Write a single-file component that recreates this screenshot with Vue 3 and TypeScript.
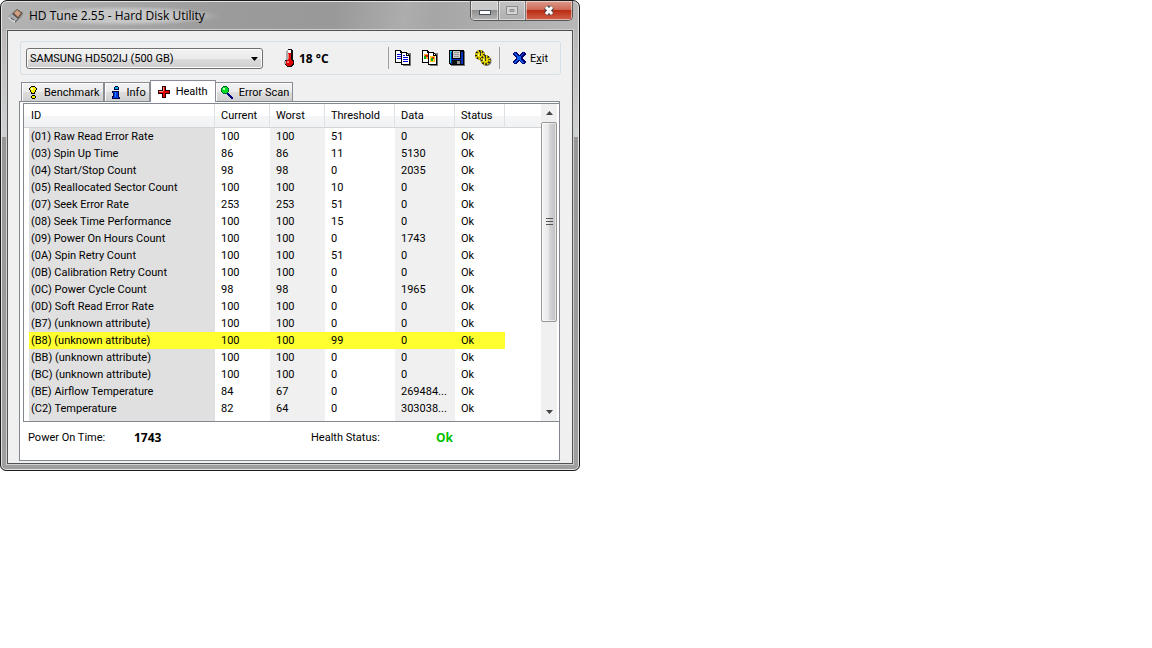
<script setup lang="ts">
import { ref } from 'vue'

interface Attribute {
  name: string
  current: number
  worst: number
  threshold: number
  data: string
  warn?: boolean
}

const drive = ref('SAMSUNG HD502IJ (500 GB)')

const columns = ['ID', 'Current', 'Worst', 'Threshold', 'Data', 'Status']

const attributes: Attribute[] = [
  { name: '(01) Raw Read Error Rate', current: 100, worst: 100, threshold: 51, data: '0' },
  { name: '(03) Spin Up Time', current: 86, worst: 86, threshold: 11, data: '5130' },
  { name: '(04) Start/Stop Count', current: 98, worst: 98, threshold: 0, data: '2035' },
  { name: '(05) Reallocated Sector Count', current: 100, worst: 100, threshold: 10, data: '0' },
  { name: '(07) Seek Error Rate', current: 253, worst: 253, threshold: 51, data: '0' },
  { name: '(08) Seek Time Performance', current: 100, worst: 100, threshold: 15, data: '0' },
  { name: '(09) Power On Hours Count', current: 100, worst: 100, threshold: 0, data: '1743' },
  { name: '(0A) Spin Retry Count', current: 100, worst: 100, threshold: 51, data: '0' },
  { name: '(0B) Calibration Retry Count', current: 100, worst: 100, threshold: 0, data: '0' },
  { name: '(0C) Power Cycle Count', current: 98, worst: 98, threshold: 0, data: '1965' },
  { name: '(0D) Soft Read Error Rate', current: 100, worst: 100, threshold: 0, data: '0' },
  { name: '(B7) (unknown attribute)', current: 100, worst: 100, threshold: 0, data: '0' },
  { name: '(B8) (unknown attribute)', current: 100, worst: 100, threshold: 99, data: '0', warn: true },
  { name: '(BB) (unknown attribute)', current: 100, worst: 100, threshold: 0, data: '0' },
  { name: '(BC) (unknown attribute)', current: 100, worst: 100, threshold: 0, data: '0' },
  { name: '(BE) Airflow Temperature', current: 84, worst: 67, threshold: 0, data: '269484...' },
  { name: '(C2) Temperature', current: 82, worst: 64, threshold: 0, data: '303038...' },
]
</script>

<template>
  <main class="window">
    <header class="titlebar">
      <svg class="app-icon" width="16" height="16" viewBox="0 0 16 16" aria-hidden="true">
        <path d="M0 9 7 2l8 5-8 8z" fill="#62666b" />
        <path d="M0 9 7 2l8 5-8 6z" fill="#a9adb1" />
        <path d="M4 6 9 1l6 4-5 6z" fill="#5f5048" />
        <path d="M6 5 9 2l4 3-3 4z" fill="#d3a080" />
        <path d="M0 9l7 4v2L0 10z" fill="#dfe3e6" />
        <path d="M3 10l3 2" stroke="#444" />
      </svg>
      <h1>HD Tune 2.55 - Hard Disk Utility</h1>
      <div class="controls">
        <button type="button" class="ctl min" aria-label="Minimize">
          <svg width="14" height="6" viewBox="0 0 14 6"><rect x="1.500" y="1.500" width="11" height="4" fill="#fff" stroke="#45505a" /></svg>
        </button>
        <button type="button" class="ctl max" aria-label="Maximize" disabled>
          <svg width="12" height="9" viewBox="0 0 12 9"><path d="M.5.500h11v8H.5zM4 3.500h4v2H4z" fill="#d4d4d4" fill-rule="evenodd" stroke="#8d8d8d" /></svg>
        </button>
        <button type="button" class="ctl close" aria-label="Close">
          <svg width="12" height="11" viewBox="0 0 12 11">
            <path d="M3 2l6 7M9 2l-6 7" stroke="#4b4650" stroke-width="5" />
            <path d="M3 2l6 7M9 2l-6 7" stroke="#fff" stroke-width="3" />
          </svg>
        </button>
      </div>
    </header>

    <div class="client">
      <div class="toolbar">
        <label class="drive">
          <select v-model="drive" aria-label="Drive">
            <option>SAMSUNG HD502IJ (500 GB)</option>
          </select>
          <svg class="arrow" width="7" height="4" viewBox="0 0 7 4" aria-hidden="true"><path d="M0 0h7L3.500 4z" /></svg>
        </label>
        <div class="temp">
          <svg width="10" height="18" viewBox="0 0 10 18" shape-rendering="crispEdges" aria-hidden="true">
            <path d="M4 0h4v1h1v10h1v5H9v1H8v1H3v-1H2v-1H1v-1H0v-3h1v-1h1V2h1V1h1z" fill="#111" />
            <path d="M3 1h3v1H4v9H2V2h1zM0 12h2v3H0z" fill="#aaa" />
            <path d="M4 1h3v3H4z" fill="#fff" />
            <path d="M4 4h3v7h1v1h1v3H8v1H7v1H3v-1H2v-4h1v-1h1z" fill="#e00000" />
            <path d="M3 12h2v2H3zM4 5h1v5H4z" fill="#ff7d7d" />
          </svg>
          <strong>18 °C</strong>
        </div>
        <div class="tools">
          <button type="button" aria-label="Copy text">
            <svg width="17" height="16" viewBox="0 0 17 16" shape-rendering="crispEdges">
              <path d="M0 0h6v1h1v1h1v11H0z" fill="#000" />
              <path d="M1 1h4v2h2v9H1z" fill="#fff" />
              <path d="M2 4h4v1H2zM2 6h4v1H2zM2 8h4v1H2z" fill="#0000e0" />
              <path d="M8 3h8v13H8z" fill="#777" />
              <path d="M6 2h6v1h1v1h1v1h1v10H6z" fill="#000" />
              <path d="M7 3h4v3h3v8H7z" fill="#fff" />
              <path d="M12 4h1v1h-1z" fill="#fff" />
              <path d="M8 5h2v1H8zM8 7h5v1H8zM8 9h5v1H8zM8 11h5v1H8z" fill="#0000e0" />
            </svg>
          </button>
          <button type="button" aria-label="Copy image">
            <svg width="17" height="16" viewBox="0 0 17 16" shape-rendering="crispEdges">
              <path d="M0 0h6v1h1v1h1v11H0z" fill="#000" />
              <path d="M1 1h4v2h2v9H1z" fill="#fff" />
              <path d="M2 4h4v5H2z" fill="#ffa528" />
              <path d="M3 5h3v2H3z" fill="#e01800" /><path d="M2 6h2v3H2z" fill="#00b418" />
              <path d="M8 3h8v13H8z" fill="#777" />
              <path d="M6 2h6v1h1v1h1v1h1v10H6z" fill="#000" />
              <path d="M7 3h4v3h3v8H7z" fill="#fff" />
              <path d="M12 4h1v1h-1z" fill="#fff" />
              <path d="M8 6h5v6H8z" fill="#ffc32c" />
              <path d="M10 7h2v2h-2z" fill="#e01800" /><path d="M9 8h2v3H9z" fill="#00b418" />
            </svg>
          </button>
          <button type="button" aria-label="Save">
            <svg width="16" height="16" viewBox="0 0 16 16" shape-rendering="crispEdges">
              <path d="M1 1h15v15H2z" fill="#777" />
              <path d="M0 0h15v15H1v-1H0z" fill="#000" />
              <path d="M1 1h2v12H1z" fill="#00c8e8" />
              <path d="M2 2h12v12H2z" fill="#0830b8" />
              <path d="M3 1h9v8H3z" fill="#000" />
              <path d="M4 1h7v7H4z" fill="#ccc" />
              <path d="M5 2h5v1H5zM5 4h5v1H5zM5 6h5v1H5z" fill="#999" />
              <path d="M3 10h9v4H3z" fill="#111" />
              <path d="M8 11h3v3H8z" fill="#999" />
            </svg>
          </button>
          <button type="button" aria-label="Options">
            <svg width="17" height="16" viewBox="0 0 17 16">
              <circle cx="11.500" cy="11" r="4" fill="#555" stroke="#666" stroke-width="2" />
              <circle cx="5" cy="5" r="4" fill="#e8d800" stroke="#111" stroke-width="2" />
              <circle cx="5" cy="5" r="4" fill="none" stroke="#f4e200" stroke-width="2" stroke-dasharray="1.600 1.540" />
              <circle cx="10.500" cy="10" r="4" fill="#e8d800" stroke="#111" stroke-width="2" />
              <circle cx="10.500" cy="10" r="4" fill="none" stroke="#f4e200" stroke-width="2" stroke-dasharray="1.600 1.540" />
              <path d="M5 1h1v5H5zM10 6h1v5h-1z" fill="#333" />
              <path d="M3 4h1v2H3zM8 9h1v2H8z" fill="#fffca0" />
            </svg>
          </button>
        </div>
        <button type="button" class="exit">
          <svg width="13" height="12" viewBox="0 0 13 12" shape-rendering="crispEdges" aria-hidden="true">
            <path d="M1 0h3v1h1v1h1v1h1V2h1V1h1V0h3v1h1v2h-1v1h-1v1h-1v2h1v1h1v1h1v2h-1v1H9v-1H8v-1H7V9H6v1H5v1H4v1H1v-1H0V9h1V8h1V7h1V5H2V4H1V3H0V1h1z" fill="#000070" />
            <path d="M1 1h2v1h1v1h1v1h3V3h1V2h1V1h1v1h-1v1H9v1H8v4h1v1h1v1h1v1H9v-1H8V9H7V8H5v1H4v1H3v1H1v-1h1V9h1V8h1V4H3V3H2V2H1z" fill="#1060f0" />
          </svg>
          <span>E<u>x</u>it</span>
        </button>
      </div>

      <nav class="tabs" role="tablist">
        <button type="button" class="tab" role="tab">
          <svg width="8" height="13" viewBox="0 0 8 13" shape-rendering="crispEdges" aria-hidden="true">
            <path d="M2 0h4v1h1v1h1v2H7v2H6v2H2V6H1V4H0V2h1V1h1zM3 9h3v1h1v2H6v1H3v-1H2v-2h1z" fill="#000" />
            <path d="M2 1h4v1h1v2H6v2H5v1H3V6H2V4H1V2h1zM3 10h3v2H3z" fill="#f6e900" />
            <path d="M2 2h2v2H2z" fill="#ffffb8" />
          </svg>
          Benchmark
        </button>
        <button type="button" class="tab" role="tab">
          <svg width="8" height="13" viewBox="0 0 8 13" shape-rendering="crispEdges" aria-hidden="true">
            <path d="M3 0h3v1h1v3H2V1h1zM1 5h6v6h1v2H0v-3h1V7H0V5z" fill="#000040" />
            <path d="M3 1h3v2H3z" fill="#00b7e8" />
            <path d="M1 6h5v5h1v1H1v-1h1V7H1z" fill="#0038e0" />
            <path d="M3 6h1v5H3z" fill="#2080ff" />
          </svg>
          Info
        </button>
        <button type="button" class="tab active" role="tab" aria-selected="true">
          <svg width="12" height="12" viewBox="0 0 12 12" shape-rendering="crispEdges" aria-hidden="true">
            <path d="M4 0h4v4h4v4H8v4H4V8H0V4h4z" fill="#200" />
            <path d="M5 1h2v4h4v2H7v4H5V7H1V5h4z" fill="#e60000" />
            <path d="M5 1h1v4H5zM1 5h4v1H1z" fill="#ff9090" />
          </svg>
          Health
        </button>
        <button type="button" class="tab scan" role="tab">
          <svg width="12" height="13" viewBox="0 0 12 13" shape-rendering="crispEdges" aria-hidden="true">
            <path d="M7 7h1v1h1v1h1v1h1v1h1v2h-2v-1H9v-1H8v-1H7V9H6V7z" fill="#000080" />
            <path d="M2 0h4v1h1v1h1v4H7v1H6v1H2V7H1V6H0V2h1V1h1z" fill="#063" />
            <path d="M2 1h4v1h1v4H6v1H2V6H1V2h1z" fill="#00e020" />
            <path d="M2 2h2v2H2z" fill="#c0ffb0" />
          </svg>
          Error Scan
        </button>
      </nav>

      <section class="panel">
        <div class="list">
          <table>
            <colgroup>
              <col class="c-id" /><col class="c-cur" /><col class="c-cur" /><col class="c-thr" /><col class="c-data" /><col class="c-stat" /><col />
            </colgroup>
            <thead>
              <tr>
                <th v-for="c in columns" :key="c" scope="col">{{ c }}</th>
                <td></td>
              </tr>
            </thead>
            <tbody>
              <tr v-for="a in attributes" :key="a.name" :class="{ warn: a.warn }">
                <td class="id">{{ a.name }}</td>
                <td>{{ a.current }}</td>
                <td class="alt">{{ a.worst }}</td>
                <td>{{ a.threshold }}</td>
                <td class="alt">{{ a.data }}</td>
                <td>Ok</td>
                <td class="rest"></td>
              </tr>
              <tr class="tail" aria-hidden="true">
                <td class="id"></td><td></td><td class="alt"></td><td></td><td class="alt"></td><td></td><td></td>
              </tr>
            </tbody>
          </table>
          <div class="scrollbar">
            <button type="button" aria-label="Scroll up"><svg width="7" height="4" viewBox="0 0 7 4"><path d="M0 4h7L3.500 0z" fill="#444" /></svg></button>
            <div class="track">
              <div class="thumb"><i></i><i></i><i></i></div>
            </div>
            <button type="button" aria-label="Scroll down"><svg width="7" height="4" viewBox="0 0 7 4"><path d="M0 0h7L3.500 4z" fill="#444" /></svg></button>
          </div>
        </div>
        <footer class="summary">
          <span class="k1">Power On Time:</span>
          <strong class="v1">1743</strong>
          <span class="k2">Health Status:</span>
          <strong class="ok">Ok</strong>
        </footer>
      </section>
    </div>
  </main>
</template>

<style>
body {
  background: #fff;
}
</style>

<style scoped>
* {
  box-sizing: border-box;
}

.window {
  width: 50%;
  min-width: 580px;
  padding: 0 6px 6px;
  border: 1px solid #1c1c1c;
  border-radius: 7px 7px 6px 6px;
  box-shadow: inset 0 0 0 1px #e4e4e4;
  background:
    linear-gradient(100deg, #b4b4b4 0, #9b9b9b 220px, #999 330px, #adadad 400px, #a6a6a6 430px, #b8b8b8 100%) top / 100% 30px no-repeat,
    linear-gradient(#b5b0b0 0, #cfd2d3 136px, #979797 136px, #a09f9f 100%);
  font: 11px/17px Roboto, "Liberation Sans", sans-serif;
  color: #000;
}

button {
  font: inherit;
  color: inherit;
  border: 0;
  padding: 0;
  background: none;
}

svg {
  display: block;
  flex: none;
}

.titlebar {
  display: flex;
  align-items: flex-start;
  height: 29px;
}

.app-icon {
  margin: 7px 0 0 1px;
}

h1 {
  margin: 5px 0 0;
  padding: 0 16px 0 5px;
  font: 12px/20px "Open Sans", "Noto Sans", sans-serif;
  background: radial-gradient(closest-side, #d6d6d6aa 60%, #d6d6d600);
}

.controls {
  display: flex;
  margin-left: auto;
  height: 20px;
  border: 1px solid #55585a;
  border-top: 0;
  border-radius: 0 0 5px 5px;
  overflow: hidden;
}

.ctl {
  display: flex;
  align-items: center;
  justify-content: center;
  box-shadow: inset 0 0 0 1px #ffffff80;
}

.min {
  width: 28px;
  padding-top: 3px;
  border-right: 1px solid #777;
  background: linear-gradient(#c9c9c9 45%, #909090 50%, #b5b5b5);
}

.max {
  width: 27px;
  border-right: 1px solid #777;
  background: linear-gradient(#c3c3c3, #b0b0b0);
}

.close {
  width: 46px;
  background: linear-gradient(#dc9c8c 0, #cd6a55 45%, #b92d14 50%, #d2624a 100%);
}

.client {
  padding: 10px 12px 2px 11px;
  border: 1px solid #505356;
  outline: 1px solid #d0d0d0;
  background: #f0f0f0;
}

.toolbar {
  display: flex;
  align-items: center;
  height: 34px;
  margin: 0 -1px 0 1px;
  padding: 0 12px 0 5px;
  border: 1px solid #d5dfe5;
  border-radius: 3px;
}

.drive {
  position: relative;
  width: 237px;
}

.drive select {
  display: block;
  width: 100%;
  height: 21px;
  padding: 0 20px 0 3px;
  appearance: none;
  border: 1px solid #707070;
  border-radius: 3px;
  background: linear-gradient(#f2f2f2, #ebebeb 50%, #dcdcdc 51%, #cfcfcf);
  box-shadow: inset 0 0 0 1px #fcfcfc;
  font: inherit;
  color: inherit;
}

.arrow {
  position: absolute;
  right: 5px;
  top: 9px;
}

.temp {
  display: flex;
  align-items: center;
  gap: 5px;
  margin-left: 21px;
}

.temp strong {
  font: bold 12px/17px "Open Sans", sans-serif;
}

.tools {
  display: flex;
  align-items: center;
  gap: 10px;
  height: 22px;
  margin-left: auto;
  padding: 0 7px 0 6px;
  border: solid #a0a0a0;
  border-width: 0 1px;
}

.exit {
  display: flex;
  align-items: center;
  gap: 4px;
  margin-left: 13px;
}

.tabs {
  display: flex;
  align-items: flex-end;
  margin: 5px 0 0 2px;
}

.tab {
  display: flex;
  align-items: center;
  height: 19px;
  padding: 1px 3px 0 7px;
  gap: 7px;
  border: 1px solid #898c95;
  border-bottom: 0;
  background: linear-gradient(#f2f2f2, #ebebeb 50%, #dddddd 51%, #cfcfcf);
  box-shadow: inset 1px 1px 0 #fcfcfc;
}

.tab.active {
  height: 22px;
  padding: 0 7px;
  gap: 6px;
  margin-bottom: -1px;
  background: #fff;
  position: relative;
}

.tab.scan {
  border-left: 0;
  gap: 6px;
  padding: 1px 3px 0 5px;
}

.panel {
  padding: 1px 0 0 3px;
  border: 1px solid #828790;
  background: #fff;
}

.list {
  display: flex;
  padding-right: 2px;
  border: solid #828790;
  border-width: 1px 0 1px 1px;
}

table {
  flex: 1;
  table-layout: fixed;
  border-collapse: separate;
  border-spacing: 0;
}

.c-id { width: 191px; }
.c-cur { width: 55px; }
.c-thr { width: 70px; }
.c-data { width: 60px; }
.c-stat { width: 50px; }

th,
td {
  padding: 0 0 0 6px;
  height: 17px;
  line-height: 17px;
  text-align: left;
  font-weight: normal;
  white-space: nowrap;
}

thead th,
thead td {
  height: 24px;
  line-height: 23px;
  border-bottom: 1px solid #d5d5d5;
  background: linear-gradient(#fff 50%, #f5f6f8 51%, #f1f2f4);
}

thead th {
  border-right: 1px solid #e0e1e3;
}

thead th:first-child {
  padding-left: 7px;
}

.id {
  padding-left: 2px;
  border-left: 5px solid #fff;
  background: #e0e0e0;
}

.alt {
  background: #f0f0f0;
}

.warn td:not(.rest) {
  background: #ffff30;
}

.tail td {
  height: 4px;
  line-height: 4px;
}

.scrollbar {
  display: flex;
  flex-direction: column;
  width: 16px;
  background: #f0f0f0;
}

.scrollbar button {
  display: flex;
  align-items: center;
  justify-content: center;
  height: 18px;
}

.track {
  flex: 1;
}

.thumb {
  display: flex;
  flex-direction: column;
  align-items: center;
  justify-content: center;
  gap: 2px;
  height: 71%;
  border: 1px solid #979797;
  border-radius: 2px;
  background: linear-gradient(90deg, #f5f5f5, #e9e9eb 45%, #d4d4d6 55%, #c0c0c4);
  box-shadow: inset 0 0 0 1px #ffffff90;
}

.thumb i {
  width: 7px;
  height: 1px;
  background: #555;
}

.summary {
  display: flex;
  height: 38px;
  padding: 7px 0 0 5px;
}

.k1 {
  width: 106px;
}

.summary strong {
  font: bold 12px/17px "Open Sans", sans-serif;
}

.v1 {
  width: 177px;
}

.k2 {
  width: 125px;
}

.summary .ok {
  color: #00c000;
}
</style>
